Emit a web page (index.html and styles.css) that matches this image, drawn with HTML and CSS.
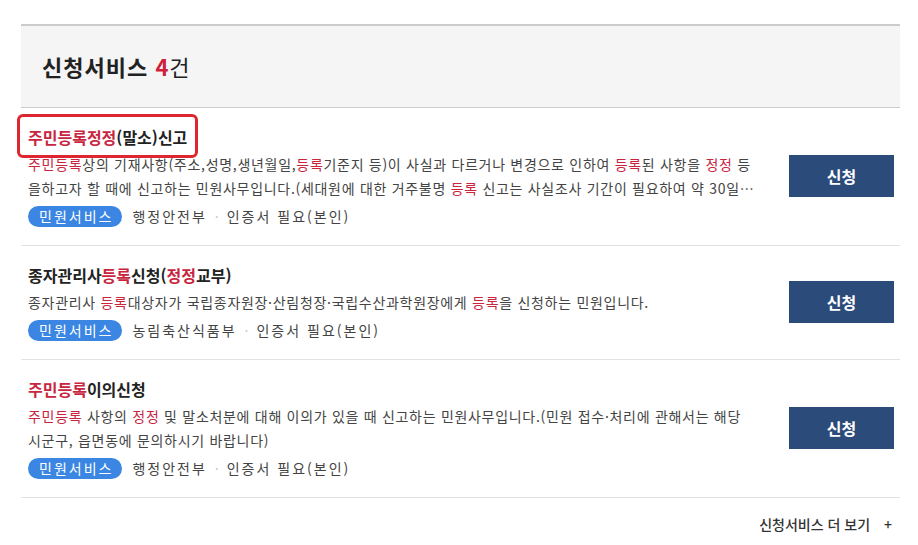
FILE: index.html
```html
<!DOCTYPE html>
<html lang="ko">
<head>
<meta charset="UTF-8" />
<title>신청서비스</title>
<link rel="stylesheet" href="styles.css">
</head>
<body>

<div class="wrap">
  <div class="head">
    <h2>신청서비스 <em>4</em><span>건</span></h2>
  </div>

  <ul class="list">
    <li class="item">
      <div class="info">
        <a class="title focused" href="#"><b>주민등록</b><b>정정</b>(말소)신고</a>
        <p class="desc"><b>주민등록</b>상의 기재사항(주소,성명,생년월일,<b>등록</b>기준지 등)이 사실과 다르거나 변경으로 인하여 <b>등록</b>된 사항을 <b>정정</b> 등을하고자 할 때에 신고하는 민원사무입니다.(세대원에 대한 거주불명 <b>등록</b> 신고는 사실조사 기간이 필요하여 약 30일 정도 소요됩니다.)</p>
        <div class="meta">
          <span class="tag">민원서비스</span>
          <span>행정안전부</span>
          <span class="dot">·</span>
          <span>인증서 필요(본인)</span>
        </div>
      </div>
      <button class="apply">신청</button>
    </li>

    <li class="item">
      <div class="info">
        <a class="title" href="#">종자관리사<b>등록</b>신청(<b>정정</b>교부)</a>
        <p class="desc">종자관리사 <b>등록</b>대상자가 국립종자원장·산림청장·국립수산과학원장에게 <b>등록</b>을 신청하는 민원입니다.</p>
        <div class="meta">
          <span class="tag">민원서비스</span>
          <span>농림축산식품부</span>
          <span class="dot">·</span>
          <span>인증서 필요(본인)</span>
        </div>
      </div>
      <button class="apply">신청</button>
    </li>

    <li class="item">
      <div class="info">
        <a class="title" href="#"><b>주민등록</b>이의신청</a>
        <p class="desc"><b>주민등록</b> 사항의 <b>정정</b> 및 말소처분에 대해 이의가 있을 때 신고하는 민원사무입니다.(민원 접수·처리에 관해서는 해당 시군구, 읍면동에 문의하시기 바랍니다)</p>
        <div class="meta">
          <span class="tag">민원서비스</span>
          <span>행정안전부</span>
          <span class="dot">·</span>
          <span>인증서 필요(본인)</span>
        </div>
      </div>
      <button class="apply">신청</button>
    </li>
  </ul>

  <div class="more">
    <a href="#">신청서비스 더 보기 <i>+</i></a>
  </div>
</div>

</body>
</html>
```

FILE: styles.css
```css
* { box-sizing: border-box; }
body { margin: 0; background: #fff; color: #333; font-family: "Noto Sans CJK KR", "Noto Sans", sans-serif; }
a { color: inherit; text-decoration: none; }

.wrap { width: 879px; margin: 24px 0 0 21px; }

.head { height: 84px; background: #f5f5f5; border-top: 2px solid #ccc; border-bottom: 1px solid #ccc; padding-left: 21px; display: flex; align-items: center; }
.head h2 { margin: 0 0 2px; font-size: 22px; font-weight: 700; color: #222; letter-spacing: 1px; }
.head em { font-style: normal; color: #d0203a; }
.head span { font-weight: 400; }

.list { list-style: none; margin: 0; padding: 0; }
.item { display: flex; align-items: center; padding: 16px 6px 18px 7px; border-bottom: 1px solid #e2e2e2; }
.info { flex: 1; min-width: 0; padding-right: 35px; }

.title { display: inline-block; font-size: 16px; font-weight: 700; line-height: 26px; color: #222; }
.title b, .desc b { font-weight: inherit; color: #c8253f; }
.title.focused { padding: 7px 8px 5px; margin: -7px -8px -5px; outline: 3px solid #dd2630; border-radius: 3px; }

.desc { margin: 2px 0 0; font-size: 14px; line-height: 24px; color: #444; letter-spacing: 0.7px; display: -webkit-box; -webkit-line-clamp: 2; -webkit-box-orient: vertical; overflow: hidden; }

.meta { display: flex; align-items: center; gap: 8px; margin-top: 5px; font-size: 14px; color: #444; height: 22px; letter-spacing: 2px; }
.tag { background: #3a86e2; color: #fff; border-radius: 11px; height: 21px; line-height: 21px; padding: 0 9px 0 11px; letter-spacing: 2px; margin-right: 2px; }
.dot { color: #ccc; letter-spacing: 0; }

.apply { flex: none; width: 105px; height: 42px; border: 0; background: #2b4b7b; color: #fff; font-family: inherit; font-size: 16px; font-weight: 700; cursor: pointer; }

.more { text-align: right; padding: 16px 8px 0 0; font-size: 14px; font-weight: 500; color: #333; }
.more i { font-style: normal; margin-left: 10px; }
```
